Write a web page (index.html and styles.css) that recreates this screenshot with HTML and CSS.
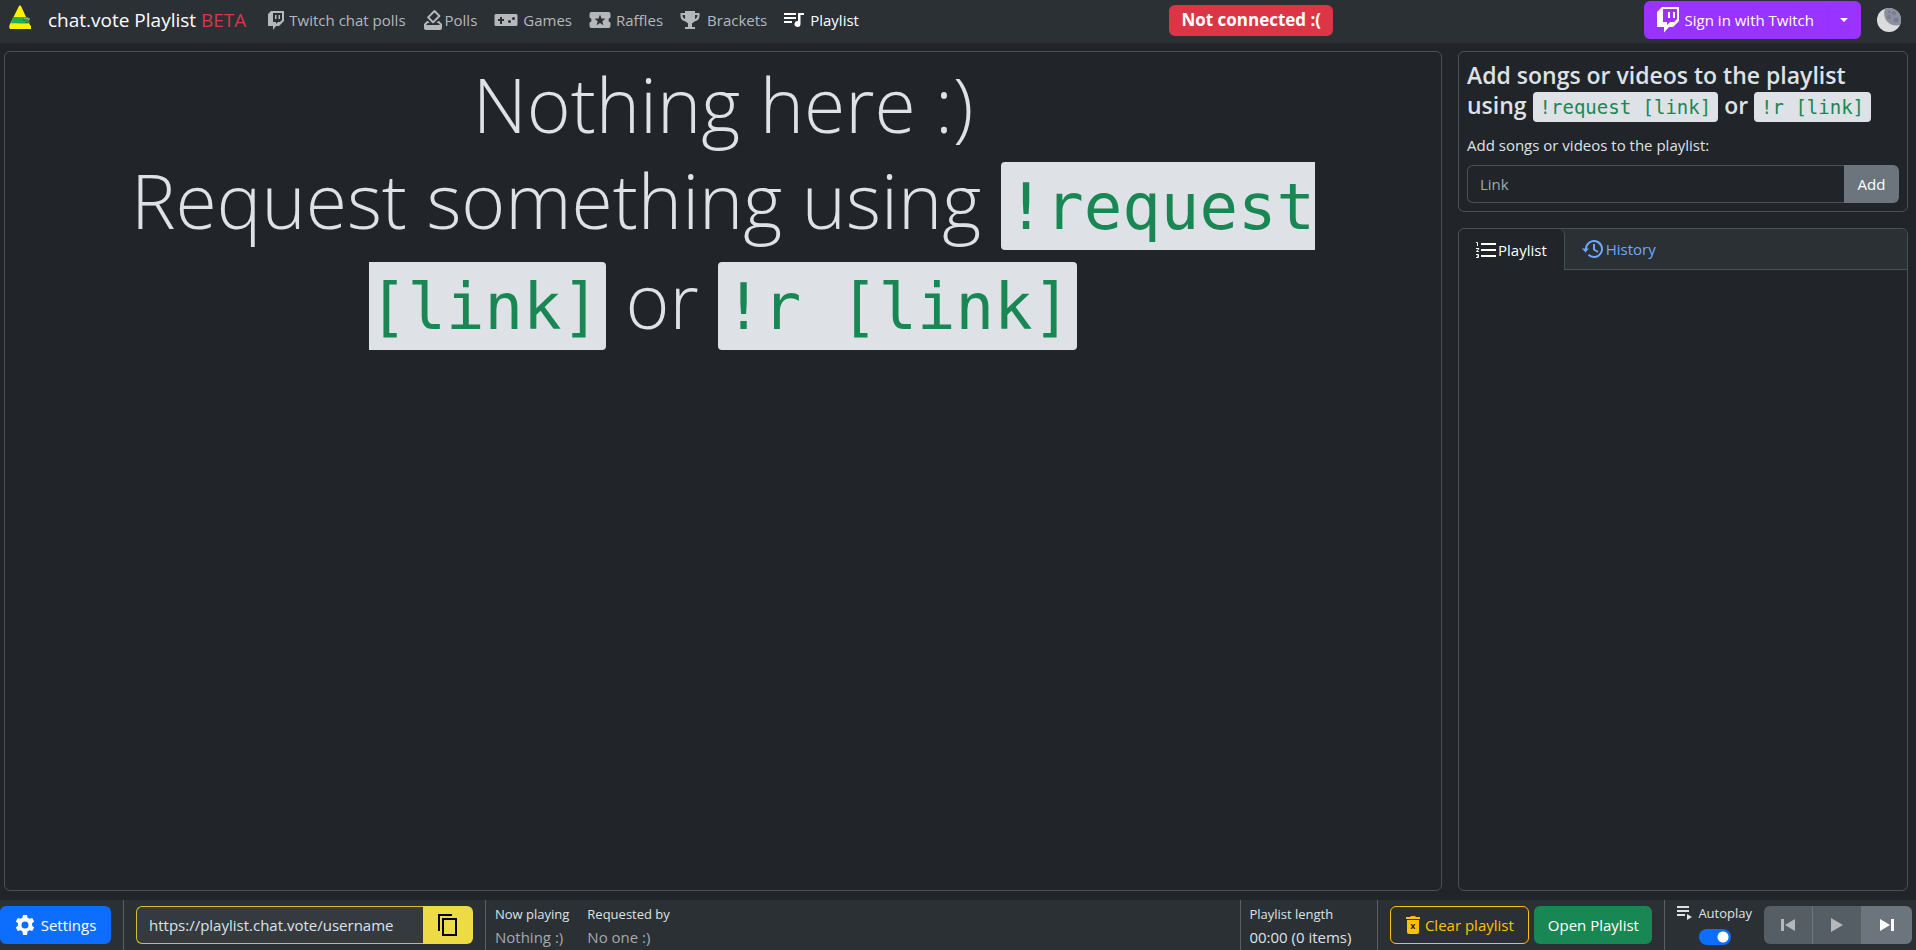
FILE: index.html
```html
<!DOCTYPE html>
<html lang="en">
<head>
<meta charset="utf-8">
<title>chat.vote Playlist</title>
<link rel="stylesheet" href="styles.css">
</head>
<body>
<header class="navbar">
  <a class="logo" href="#" aria-label="Home">
    <svg width="24" height="26" viewBox="0 0 24 26"><path fill="#fff200" d="M11 1c1-1 2 0 2.500 1l4.500 10 4 8 1 1v3H2c-1-1-1-3 0-5L9 5z"/><path fill="#22b14c" d="M5 12h15l2 6c-6 1.500-12-.5-19 .5z"/><path stroke="#c8bfc0" d="M16 14h6M17 16h3"/><path stroke="#3a4a2a" d="M15 15h5M17 17h5"/></svg>
  </a>
  <a class="brand" href="#">chat.vote Playlist <span class="beta">BETA</span></a>
  <nav class="links">
    <a href="#" class="link twitch"><svg width="16" height="20" viewBox="0 0 16 20"><path fill="currentColor" fill-rule="evenodd" d="M3 1h13v10l-5 5H8l-3 4v-4H0V4zM5 3v9h3v2l2-2h2l2-2V3zM7 5h1.500v4H7zm3.500 0H12v4h-1.500z"/></svg><span>Twitch chat polls</span></a>
    <a href="#" class="link polls"><svg width="20" height="20" viewBox="2 2 20 20"><path fill="currentColor" d="M18 13h-.68l-2 2h1.910L19 17H5l1.780-2h2.050l-2-2H6l-3 3v4c0 1.100.89 2 1.990 2H19a2 2 0 002-2v-4l-3-3zm-1-5.050l-4.950 4.950-3.540-3.540 4.950-4.950L17 7.950zm-4.240-5.660L6.390 8.660a.996.996 0 000 1.410l4.950 4.950c.39.39 1.020.39 1.410 0l6.360-6.360a.996.996 0 000-1.410L14.160 2.300a.975.975 0 00-1.400-.010z"/></svg><span>Polls</span></a>
    <a href="#" class="link games"><svg width="24" height="20" viewBox="0 0 24 20"><path fill="currentColor" fill-rule="evenodd" d="M2 4h20q1.500 0 1.500 1.500v9q0 1.500-1.500 1.500H2q-1.500 0-1.500-1.500v-9Q.5 4 2 4zm4 3v2H4v2h2v3h2v-3h2V9H8V7zM15.500 10a1.500 1.500 0 100 3 1.500 1.500 0 000-3zm4-3a1.500 1.500 0 100 3 1.500 1.500 0 000-3z"/></svg><span>Games</span></a>
    <a href="#" class="link raffles"><svg width="22" height="20" viewBox="0 0 22 20"><path fill="currentColor" fill-rule="evenodd" d="M2.500 2h17q2 0 2 2v3.500q-2 .5-2 2.500t2 2.500V16q0 2-2 2h-17q-2 0-2-2v-3.500q2-.5 2-2.500t-2-2.500V4q0-2 2-2zM11 4.500L9.500 8.500l-4 .2 3.200 2.500-1.100 4L11 13l3.400 2.200-1.100-4 3.200-2.500-4-.2z"/></svg><span>Raffles</span></a>
    <a href="#" class="link brackets"><svg width="20" height="20" viewBox="0 0 20 20"><path fill="currentColor" fill-rule="evenodd" d="M5 1h10v2h4.500v3c0 3-2 5-5 5.500L12 13.500V17h3v2H5v-2h3v-3.500l-2.500-2C2.500 11 .5 9 .5 6V3H5zM2.500 5c0 2 1 3.500 2.500 4V5zM15 9c1.500-.5 2.500-2 2.500-4H15z"/></svg><span>Brackets</span></a>
    <a href="#" class="link active"><svg width="21" height="20" viewBox="0 0 21 20"><path fill="currentColor" d="M0 3h12v2H0zm0 4h12v2H0zm0 4h8v2H0zM14 3h6v2h-3.500v9a3 3 0 11-2.500-3z"/></svg><span>Playlist</span></a>
  </nav>
  <strong class="status">Not connected :(</strong>
  <div class="account">
    <div class="signin">
      <button class="signin-main"><svg width="22" height="26" viewBox="0 0 22 26"><path fill="#fff" fill-rule="evenodd" d="M5 0h17v14l-6 6h-4l-5 5.500V20H0V5zM6 2v13h4v3l3-3h4l3-3V2zM11 5h2v6h-2zm5 0h2v6h-2z"/></svg>Sign in with Twitch</button>
      <button class="signin-more" aria-label="More"><svg width="8" height="4" viewBox="0 0 8 4"><path fill="#fff" d="M0 0h8L4 4z"/></svg></button>
    </div>
    <button class="theme" aria-label="Theme"><svg width="24" height="24" viewBox="0 0 24 24"><circle cx="12" cy="12" r="12" fill="#dcdcdc"/><path fill="#8b90a0" d="M8 .7A12 12 0 0123 16.800C15 20 4 12 8 .7z"/><g fill="#777c8e"><circle cx="12" cy="4" r="1.500"/><circle cx="17" cy="5" r="2"/><circle cx="12" cy="9" r="2"/><circle cx="19" cy="12" r="2.500"/></g></svg></button>
  </div>
</header>

<main class="content">
  <section class="stage card">
    <h1 class="empty">Nothing here :)<br>Request something using <code>!request [link]</code> or <code>!r [link]</code></h1>
  </section>
  <aside class="side">
    <section class="card request">
      <h2 class="request-title">Add songs or videos to the playlist using <code>!request [link]</code> or <code>!r [link]</code></h2>
      <label class="request-label" for="link">Add songs or videos to the playlist:</label>
      <div class="field">
        <input id="link" type="text" placeholder="Link">
        <button class="add">Add</button>
      </div>
    </section>
    <section class="card queue">
      <div class="tabs" role="tablist">
        <button class="tab selected" role="tab"><svg width="20" height="18" viewBox="0 0 20 18"><path fill="currentColor" d="M5 2h15v2H5zm0 6h15v2H5zm0 6h15v2H5z"/><path fill="none" stroke="currentColor" d="M0 1.500h1.500V5M0 7.500h3L.5 10.500H3M0 13.500h2.500v3H0M1 15h1.500"/></svg>Playlist</button>
        <button class="tab" role="tab"><svg width="22" height="20" viewBox="0 0 22 20"><path fill="none" stroke="currentColor" stroke-width="2" d="M4 10a8 8 0 112.500 5.800M12 5v5.500l4 2.500"/><path fill="currentColor" d="M0 9.500h7L3.500 13.500z"/></svg>History</button>
      </div>
    </section>
  </aside>
</main>

<footer class="bar">
  <div class="cell cell-settings"><button class="btn settings"><svg width="20" height="20" viewBox="0 0 20 20"><path fill="#fff" fill-rule="evenodd" d="M8 0h4l.6 2.700 1.900 1.100 2.700-.9 2 3.500-2.100 1.800v2.600l2.100 1.800-2 3.500-2.700-.9-1.900 1.100L12 20H8l-.6-3.700-1.900-1.100-2.700.9-2-3.500 2.100-1.800V8.200L.8 6.400l2-3.500 2.700.9 1.900-1.100zm2 6.500a3.500 3.500 0 100 7 3.500 3.500 0 000-7z"/></svg>Settings</button></div>
  <div class="cell cell-url">
    <div class="field url"><input type="text" aria-label="Playlist address" value="https://playlist.chat.vote/username" readonly><button class="copy" aria-label="Copy"><svg width="20" height="24" viewBox="0 0 20 24"><path fill="none" stroke="#000" stroke-width="2" d="M1 18V2h13M5 6h13v16H5z"/></svg></button></div>
  </div>
  <div class="cell cell-now">
    <dl class="info"><dt>Now playing</dt><dd class="muted">Nothing :)</dd></dl>
    <dl class="info"><dt>Requested by</dt><dd class="muted">No one :)</dd></dl>
  </div>
  <div class="cell cell-length"><dl class="info"><dt>Playlist length</dt><dd>00:00 (0 items)</dd></dl></div>
  <div class="cell cell-actions">
    <button class="btn clear"><svg width="14" height="18" viewBox="0 0 14 18"><path fill="currentColor" fill-rule="evenodd" d="M4.500 0h5v1H14v2H0V1h4.500zM1 4h12v12q0 2-2 2H3q-2 0-2-2zm3.500 4L6 10.500 4.500 13H6l1-1.500L8 13h1.500L8 10.500 9.500 8H8L7 9.500 6 8z"/></svg>Clear playlist</button>
    <button class="btn open">Open Playlist</button>
  </div>
  <div class="cell cell-play">
    <div class="autoplay">
      <label for="autoplay"><svg width="16" height="14" viewBox="0 0 16 14"><path fill="currentColor" d="M0 0h12v2H0zm0 4h12v2H0zm0 4h8v2H0zm10 0l5 3-5 3z"/></svg>Autoplay</label>
      <input id="autoplay" class="switch" type="checkbox" role="switch" checked>
    </div>
    <div class="transport">
      <button aria-label="Previous" disabled><svg width="14" height="12" viewBox="0 0 14 12"><path fill="currentColor" d="M0 0h3v12H0zm14 0v12L4 6z"/></svg></button>
      <button aria-label="Play" disabled><svg width="12" height="14" viewBox="0 0 12 14"><path fill="currentColor" d="M0 0l12 7-12 7z"/></svg></button>
      <button aria-label="Next"><svg width="14" height="12" viewBox="0 0 14 12"><path fill="currentColor" d="M11 0h3v12h-3zM0 0l10 6-10 6z"/></svg></button>
    </div>
  </div>
</footer>
</body>
</html>
```
FILE: styles.css
```css
* { box-sizing: border-box; }

body {
  margin: 0;
  height: 100vh;
  display: flex;
  flex-direction: column;
  background: #212529;
  color: #dee2e6;
  font: 15px/24px "Open Sans", "Noto Sans", sans-serif;
}

button, input { font: inherit; color: inherit; margin: 0; }
button {
  display: flex;
  align-items: center;
  justify-content: center;
  border: 0;
  padding: 0;
  background: none;
  white-space: nowrap;
}
a { color: inherit; text-decoration: none; }
svg { display: block; flex: none; }
h1, h2, dl, dd { margin: 0; }

code {
  font-family: "DejaVu Sans Mono", monospace;
  color: #198754;
  background: #dee2e6;
  border-radius: 4px;
}

.card { border: 1px solid #495057; border-radius: 6px; }

/* Top bar */
.navbar {
  display: flex;
  flex: none;
  align-items: center;
  height: 43px;
  padding: 1px 15px 4px 8px;
  background: #2b3035;
}
.logo { align-self: flex-start; padding-top: 4px; margin-right: 16px; }
.brand { font-size: 19px; color: #fff; margin-right: 22px; white-space: nowrap; }
.beta { color: #dc3545; }
.links { display: flex; gap: 17px; color: #b5b8bb; }
.link { display: flex; align-items: center; gap: 5px; white-space: nowrap; }
.polls { gap: 2px; }
.brackets { gap: 7px; }
.active { color: #fff; }
.status {
  margin: 0 auto;
  padding: 3px 12px 4px;
  border-radius: 6px;
  background: #dc3545;
  color: #fff;
  font-size: 17px;
  white-space: nowrap;
}
.account { display: flex; align-items: center; gap: 16px; }
.signin { display: flex; height: 38px; border-radius: 6px; background: #9933ff; color: #fff; }
.signin-main { gap: 6px; padding: 0 13px; }
.signin-more { width: 34px; border-left: 1px solid #8a3edb; }

/* Main area */
.content {
  flex: 1;
  min-height: 0;
  display: grid;
  grid-template-columns: minmax(0, 1438fr) minmax(0, 450fr);
  gap: 16px;
  padding: 8px 8px 9px 4px;
}
.stage { padding: 4px 8px; text-align: center; }
.empty { font-size: 75px; line-height: 96px; font-weight: 300; }
.empty code { font-size: 64px; line-height: 90px; font-weight: 400; padding: 8px 6px 6px; }

.side { display: flex; flex-direction: column; gap: 16px; }
.request { padding: 8px; }
.request-title { font-size: 23px; line-height: 30px; font-weight: 600; }
.request-title code { font-size: 19px; line-height: 24px; font-weight: 400; padding: 4px 7px; }
.request-label { display: block; margin: 13px 0 8px; }
.field { display: flex; height: 38px; }
.field input {
  flex: 1;
  min-width: 0;
  padding: 0 12px;
  border: 1px solid #495057;
  border-right: 0;
  border-radius: 6px 0 0 6px;
  background: #212529;
}
.field input::placeholder { color: #a5a9ad; opacity: 1; }
.add { width: 55px; border-radius: 0 6px 6px 0; background: #6c757d; color: #fff; }

.queue { flex: 1; }
.tabs { display: flex; height: 41px; background: #2b3035; border-bottom: 1px solid #495057; border-radius: 6px 6px 0 0; }
.tab { gap: 2px; padding: 0 17px; color: #6ea8fe; }
.selected {
  height: 41px;
  background: #212529;
  color: #fff;
  border-right: 1px solid #495057;
  border-radius: 6px 6px 0 0;
}

/* Bottom bar */
.bar { display: flex; flex: none; height: 50px; background: #2b3035; padding-right: 4px; }
.cell { display: flex; align-items: center; border-left: 1px solid #5b6065; padding: 0 12px; }
.btn { height: 38px; border-radius: 6px; padding: 0 12px; color: #fff; }
.cell-settings { border-left: 0; padding-left: 0; }
.settings { width: 111px; gap: 6px; background: #0d6efd; }
.url { width: 337px; }
.url input { border-color: #d4c02a; background: #343a40; }
.copy { width: 50px; border-radius: 0 6px 6px 0; background: #ecdb44; }
.cell-now { flex: 1; gap: 18px; padding-left: 9px; }
.info { white-space: nowrap; }
.info dt { font-size: 13px; line-height: 21px; padding-top: 2px; }
.muted { color: #a5a9ad; }
.cell-length { width: 137px; padding-left: 8px; }
.cell-actions { gap: 5px; }
.clear { width: 139px; gap: 5px; border: 1px solid #ffc107; color: #ffc107; }
.open { width: 118px; background: #198754; }
.cell-play { gap: 12px; padding-right: 0; }
.autoplay { display: grid; justify-items: center; gap: 4px; padding-bottom: 4px; }
.autoplay label { display: flex; align-items: center; gap: 5px; font-size: 13px; }
.switch {
  appearance: none;
  width: 32px;
  height: 16px;
  margin: 0;
  border-radius: 8px;
  background: radial-gradient(circle at 24px 8px, #fff 5px, #0d6efd 6px);
}
.transport { display: flex; height: 38px; border-radius: 6px; overflow: hidden; }
.transport button { width: 50px; background: #6c757d; color: #fff; }
.transport button:disabled { width: 49px; background: #565e65; color: #b5b8bb; border-right: 1px solid #6c757d; }
```
